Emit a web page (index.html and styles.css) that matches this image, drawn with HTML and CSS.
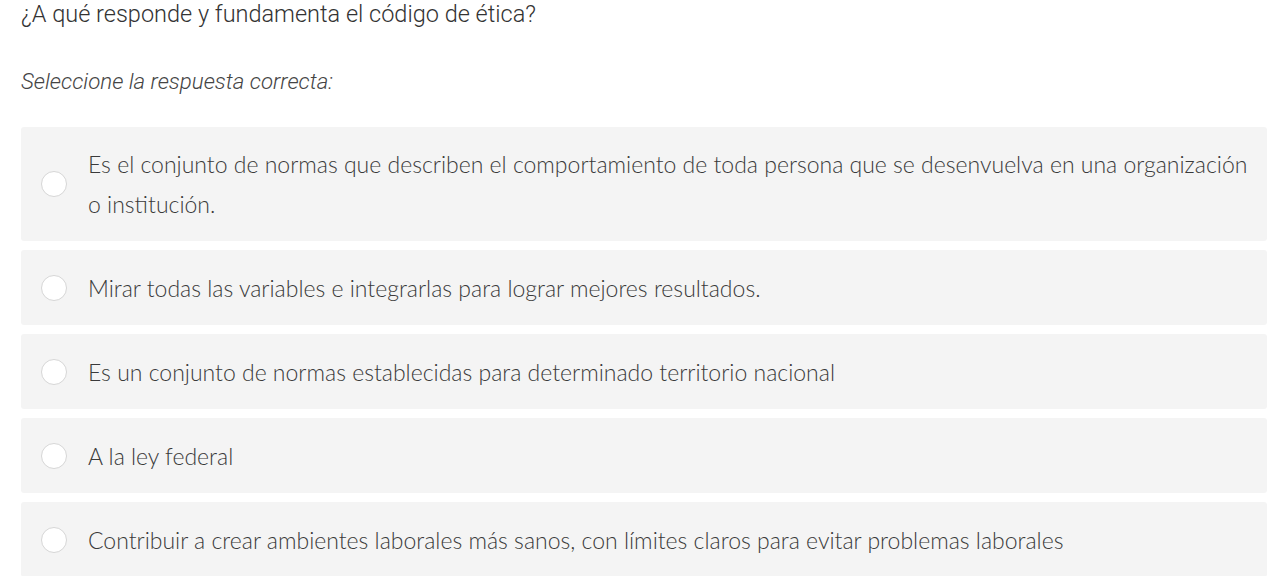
FILE: index.html
```html
<!DOCTYPE html>
<html lang="es">
	<head>
		<meta charset="UTF-8" />
		<meta name="viewport" content="width=device-width, initial-scale=1.0" />
		<title>Pregunta</title>
		<link rel="stylesheet" href="styles.css">
	</head>
	<body>
		<div class="question">
			<p class="prompt">¿A qué responde y fundamenta el código de ética?</p>
			<p class="hint">Seleccione la respuesta correcta:</p>

			<div class="answers">
				<label class="answer">
					<input type="radio" name="answer" value="1" />
					<span class="text">Es el conjunto de normas que describen el comportamiento de toda persona que se desenvuelva en una organización o institución.</span>
				</label>
				<label class="answer">
					<input type="radio" name="answer" value="2" />
					<span class="text">Mirar todas las variables e integrarlas para lograr mejores resultados.</span>
				</label>
				<label class="answer">
					<input type="radio" name="answer" value="3" />
					<span class="text">Es un conjunto de normas establecidas para determinado territorio nacional</span>
				</label>
				<label class="answer">
					<input type="radio" name="answer" value="4" />
					<span class="text">A la ley federal</span>
				</label>
				<label class="answer">
					<input type="radio" name="answer" value="5" />
					<span class="text">Contribuir a crear ambientes laborales más sanos, con límites claros para evitar problemas laborales</span>
				</label>
			</div>
		</div>
	</body>
</html>
```

FILE: styles.css
```css
* {
	box-sizing: border-box;
}
body {
	margin: 0;
	padding: 0;
	font-family: Roboto, "Liberation Sans", sans-serif;
	color: #444;
	background: #fff;
}
.question {
	padding: 0 0 0 21px;
}
.prompt {
	margin: 0;
	font-size: 23.5px;
	font-weight: 300;
	line-height: 28px;
	color: #333;
}
.hint {
	margin: 39px 0 0;
	font-size: 22.3px;
	font-weight: 300;
	font-style: italic;
	line-height: 28px;
	color: #444;
}
.answers {
	display: flex;
	flex-direction: column;
	gap: 9px;
	margin-top: 32px;
}
.answer {
	display: flex;
	align-items: center;
	gap: 21px;
	min-height: 75px;
	padding: 17px 10px 17px 20px;
	background-color: #f4f4f4;
	border-radius: 3px;
	font-family: Lato, "Open Sans", sans-serif;
	font-size: 23px;
	font-weight: 300;
	line-height: 40px;
	color: #3a3a3a;
	cursor: pointer;
}
.answer input {
	appearance: none;
	flex: none;
	width: 26px;
	height: 26px;
	margin: 0;
	border: 1px solid #d6d6d6;
	border-radius: 50%;
	background: #fff;
}
.answer input:checked {
	border: 7px solid #253043;
}
.text {
	display: block;
}
```
